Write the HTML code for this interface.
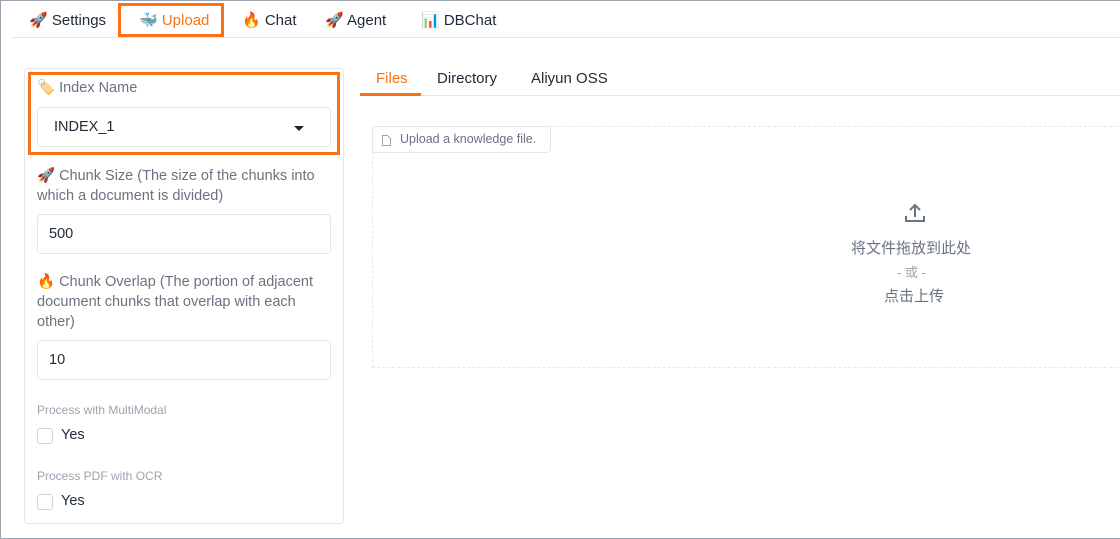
<!DOCTYPE html><html><head><style>
*{box-sizing:border-box}
body{margin:0;width:1120px;height:539px;overflow:hidden;background:#fff;font-family:"Liberation Sans","Noto Sans CJK SC",sans-serif;color:#1f2937;position:relative}
.frame{position:absolute;inset:0;border:1px solid #9ca3af;border-right:none}
.a{position:absolute;white-space:nowrap}
.tab{font-size:15px;top:11px}
.lbl{font-size:14.5px;color:#6b7280}
.in{position:absolute;border:1px solid #e5e7eb;border-radius:4px;height:40px;font-size:14.5px;padding:11px 11px}
.cb{position:absolute;width:16px;height:16px;border:1px solid #d1d5db;border-radius:3px}
</style></head><body>
<div class="frame"></div>
<div class="a tab" style="left:29px">🚀 Settings</div>
<div class="a" style="left:118px;top:3px;width:106px;height:34px;border:3px solid #f97316"></div>
<div class="a tab" style="left:139px;color:#f97316">🐳 Upload</div>
<div class="a tab" style="left:242px">🔥 Chat</div>
<div class="a tab" style="left:325px">🚀 Agent</div>
<div class="a tab" style="left:421px">📊 DBChat</div>
<div class="a" style="left:12px;top:37px;width:1108px;height:1px;background:#e5e7eb"></div>

<div class="a" style="left:24px;top:68px;width:320px;height:456px;border:1px solid #e5e7eb;border-radius:4px"></div>
<div class="a" style="left:28px;top:72px;width:312px;height:83px;border:3px solid #f97316"></div>
<div class="a lbl" style="left:37px;top:79px">🏷️ Index Name</div>
<div class="in" style="left:37px;top:107px;width:294px;padding-left:16px">INDEX_1<span style="position:absolute;right:26px;top:18px;border:5px solid transparent;border-top:5px solid #222;border-bottom:none"></span></div>
<div class="a lbl" style="left:37px;top:166px;line-height:20px">🚀 Chunk Size (The size of the chunks into<br>which a document is divided)</div>
<div class="in" style="left:37px;top:214px;width:294px">500</div>
<div class="a lbl" style="left:37px;top:272px;line-height:20px">🔥 Chunk Overlap (The portion of adjacent<br>document chunks that overlap with each<br>other)</div>
<div class="in" style="left:37px;top:340px;width:294px">10</div>
<div class="a" style="left:37px;top:403px;font-size:12px;color:#9ca3af">Process with MultiModal</div>
<div class="cb" style="left:37px;top:428px"></div><div class="a" style="left:61px;top:427px;font-size:14.5px">Yes</div>
<div class="a" style="left:37px;top:469px;font-size:12px;color:#9ca3af">Process PDF with OCR</div>
<div class="cb" style="left:37px;top:494px"></div><div class="a" style="left:61px;top:493px;font-size:14.5px">Yes</div>

<div class="a" style="left:360px;top:95px;width:760px;height:1px;background:#e5e7eb"></div>
<div class="a" style="left:360px;top:93px;width:61px;height:3px;background:#f97316"></div>
<div class="a" style="left:376px;top:70px;font-size:15px;color:#f97316">Files</div>
<div class="a" style="left:437px;top:70px;font-size:15px">Directory</div>
<div class="a" style="left:531px;top:70px;font-size:15px">Aliyun OSS</div>

<div class="a" style="left:372px;top:126px;width:760px;height:242px;border:1px dashed #e5e7eb"></div>
<div class="a" style="left:372px;top:126px;width:179px;height:27px;border:1px solid #e5e7eb;border-radius:0 0 4px 0;font-size:12.5px;color:#6b7280;padding:5px 0 0 27px">Upload a knowledge file.
<svg style="position:absolute;left:9px;top:8px" width="9" height="11" viewBox="0 0 9 11"><path d="M.5.5h5l3 3v7h-8z" fill="none" stroke="#9ca3af"/></svg></div>
<svg class="a" style="left:903px;top:201px" width="24" height="24" viewBox="0 0 24 24" fill="none" stroke="#6b7280" stroke-width="2"><path d="M3 15v5h18v-5M12 4v12M7 9l5-5 5 5"/></svg>
<div class="a" style="left:851px;top:237px;font-size:15px;color:#6b7280">将文件拖放到此处</div>
<div class="a" style="left:897px;top:262px;font-size:13px;color:#9ca3af">- 或 -</div>
<div class="a" style="left:884px;top:285px;font-size:15px;color:#6b7280">点击上传</div>
</body></html>
